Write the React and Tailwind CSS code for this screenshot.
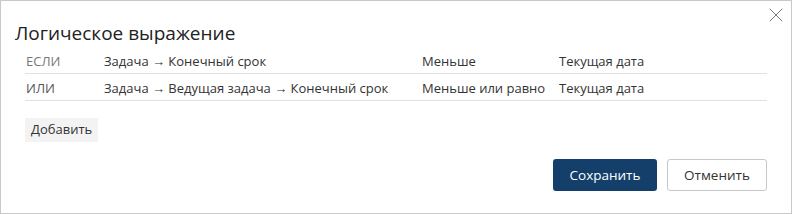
import { X } from "lucide-react";

const rows = [
  { op: "ЕСЛИ", field: "Задача → Конечный срок", cond: "Меньше", value: "Текущая дата", muted: true },
  { op: "ИЛИ", field: "Задача → Ведущая задача → Конечный срок", cond: "Меньше или равно", value: "Текущая дата" },
];

function ExpressionRow({ row }) {
  return (
    <div className="flex items-center h-[27px] pt-[4px] border-b border-[#e1e1e1] text-[13px] text-[#333333]">
      <div className={`w-[79px] pl-px ${row.muted ? "text-[#767676]" : "text-[#555555]"}`}>{row.op}</div>
      <div className="w-[318px]">{row.field}</div>
      <div className="w-[137px]">{row.cond}</div>
      <div className="flex-1">{row.value}</div>
    </div>
  );
}

export default function App() {
  return (
    <div
      className="relative w-[792px] h-[214px] bg-white border border-[#c8c8c8]"
      style={{ fontFamily: '"Segoe UI", "Open Sans", "Noto Sans", sans-serif' }}
    >
      <button className="absolute top-[2px] right-[3px] text-[#7a7a7a]">
        <X className="w-[24px] h-[24px]" strokeWidth={1} />
      </button>

      <div className="pl-[14px] pt-[18px] pr-[24px]">
        <h2 className="text-[19px] leading-[28px] text-[#222222] font-normal">Логическое выражение</h2>

        <div className="ml-[10px]">
          {rows.map((row) => (
            <ExpressionRow key={row.op} row={row} />
          ))}
        </div>

        <div className="ml-[10px] mt-[15px]">
          <button className="h-[24px] px-[6px] bg-[#f3f3f3] text-[13px] text-[#333333]">Добавить</button>
        </div>

        <div className="flex justify-end gap-[10px] mt-[17px]">
          <button className="w-[104px] h-[32px] rounded-[3px] bg-[#143f6b] text-white text-[13.5px]">Сохранить</button>
          <button className="w-[100px] h-[32px] rounded-[3px] border border-[#c8c8c8] bg-white text-[#333333] text-[13.5px]">
            Отменить
          </button>
        </div>
      </div>
    </div>
  );
}
